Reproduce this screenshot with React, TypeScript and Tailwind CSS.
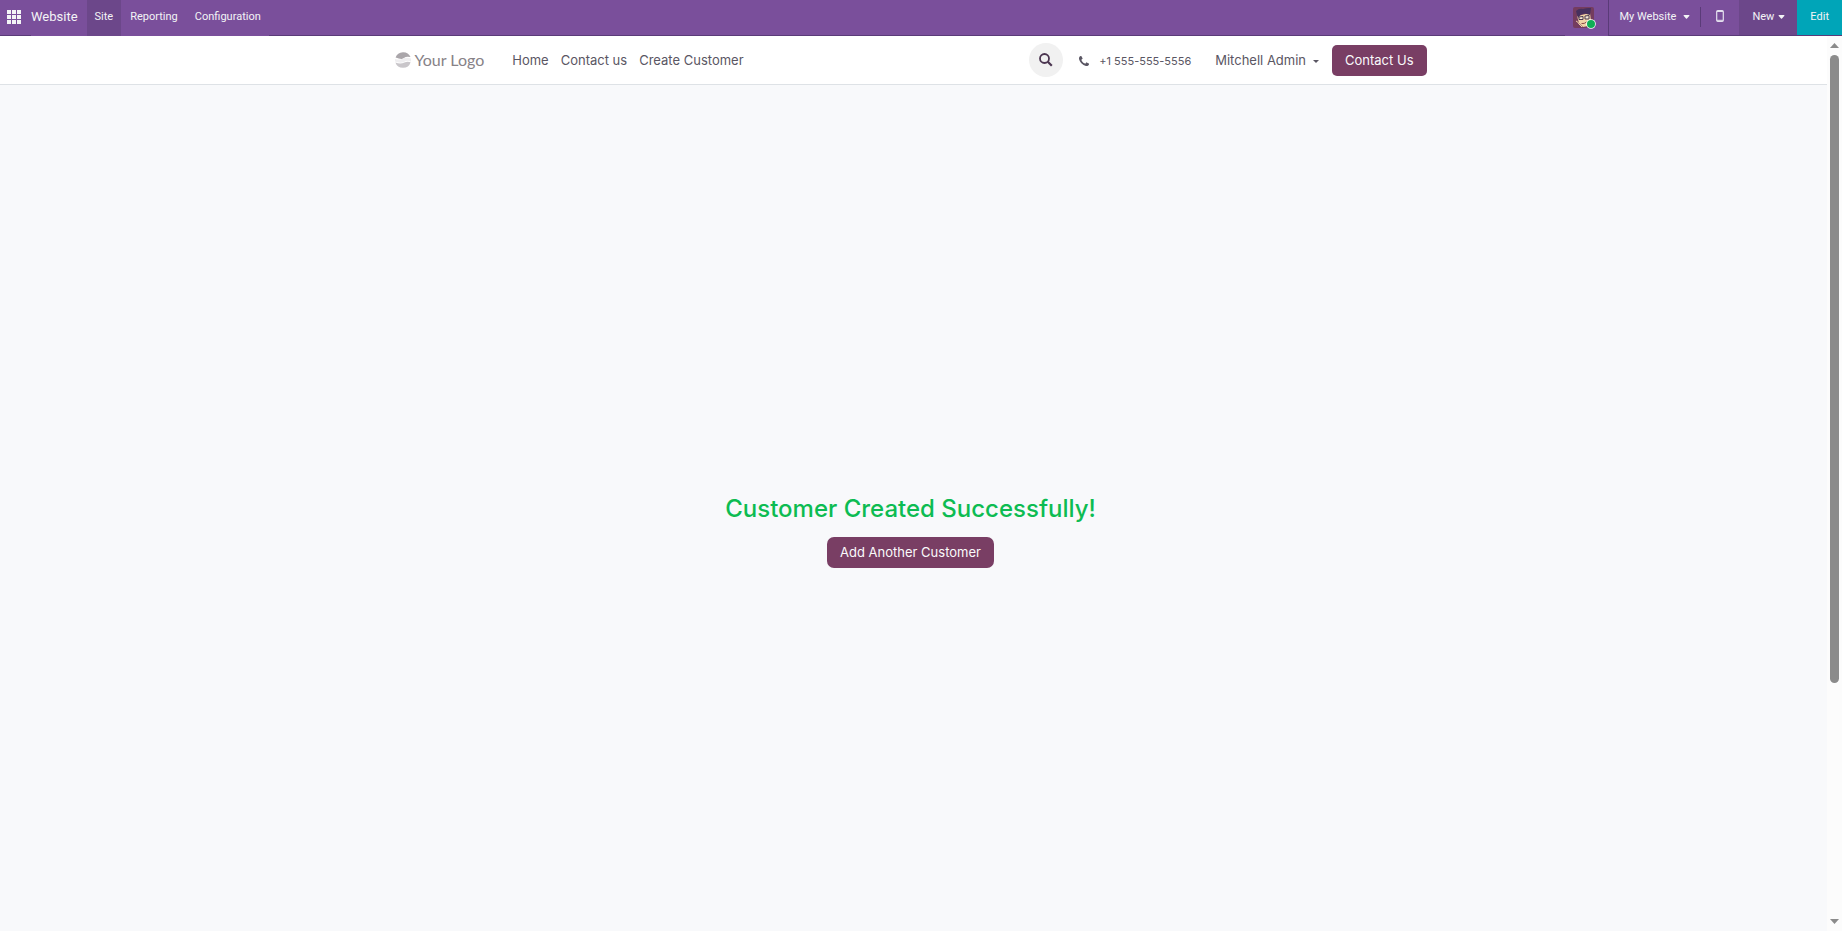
import React from 'react';

const bottomLine = 'border-b border-[#5a3b78]';

const Caret: React.FC = () => (
    <svg viewBox="0 0 8 5" className="w-[7px] h-1 fill-current" aria-hidden="true">
        <path d="M1 0h6q1.2.2.4 1.200L4.600 4.500q-.6.6-1.200 0L.6 1.200Q-.2.2 1 0z" />
    </svg>
);

const AppsIcon: React.FC = () => (
    <svg viewBox="0 0 14 14" className="w-3.5 h-3.5 fill-gray-100" aria-hidden="true">
        {[0, 5, 10].map((y) => [0, 5, 10].map((x) => <rect key={`${x}-${y}`} x={x} y={y} width="4" height="4" />))}
    </svg>
);

const Avatar: React.FC = () => (
    <svg viewBox="0 0 23 22" className="w-[23px] h-[22px]" aria-hidden="true">
        <rect width="21" height="21" rx="2" fill="#743c5e" />
        <path d="M4 9l13-3 1 8-3 5-5 1-4-4z" fill="#f0d3a6" />
        <path d="M3 4q3-3 7-2 4-1.500 8-1l-1 7-5-1.500-4 1L5 11 4 8z" fill="#46305e" />
        <path d="M6 10l4-.5v3H6zM12 9l4-.5v3.500h-4z" fill="#f6ead6" stroke="#4a3850" strokeWidth="1" />
        <path d="M3 14q2 .5 3 3l3 3" stroke="#f0d3a6" fill="none" />
        <path d="M8.500 16.500q3 .5 5-1.500" stroke="#8a4a4a" fill="none" />
        <circle cx="18" cy="17" r="4.800" fill="#fff" />
        <circle cx="18" cy="17" r="4" fill="#0fae55" />
    </svg>
);

const Logo: React.FC = () => (
    <a href="#" className="flex items-center gap-1 text-[#878287]">
        <svg viewBox="0 0 16 16" className="w-4 h-4" aria-hidden="true">
            <path d="M.6 5.500A8 8 0 0 1 15.500 5Q11 4 9 6T.6 5.500z" fill="#aaa6aa" />
            <path d="M0 7q4 1 7 0 3-2 9-.5v3Q12 8 9 10q-4 1.500-9-.5z" fill="#efeef0" />
            <path d="M.4 10.500q5 1.800 9 0 3-1.500 6.200-.3A8 8 0 0 1 .4 10.500z" fill="#c9c6ca" />
        </svg>
        <span className="font-['Lato'] text-base">Your Logo</span>
    </a>
);

const TopBar: React.FC = () => (
    <nav className="flex h-9 shrink-0 bg-[#7a4f9b] text-[11px] text-gray-100 font-['Roboto',sans-serif]">
        <button aria-label="Apps" className={`w-[31px] pl-[7px] pb-px ${bottomLine}`}><AppsIcon /></button>
        <a href="#" className="flex items-center pb-[3px] pr-[9px] text-[13px]">Website</a>
        <button className="px-2 pb-0.5 bg-[#6c478a]">Site</button>
        <button className="px-[9px] pb-0.5">Reporting</button>
        <button className="px-2 pb-0.5">Configuration</button>
        <div className={`flex-1 ${bottomLine}`}></div>
        <button aria-label="Mitchell Admin" className="w-11 pl-2 border-r border-[#5a3b78]"><Avatar /></button>
        <button className={`flex items-center gap-[7px] px-2.5 pb-px ${bottomLine}`}>My Website <Caret /></button>
        <div className={`flex items-center pb-0.5 ${bottomLine}`}><span className="w-px h-5 bg-[#5a3b78]"></span></div>
        <button aria-label="Mobile preview" className={`w-[38px] pl-[15px] pb-[3px] ${bottomLine}`}>
            <svg viewBox="0 0 8 12" className="w-2 h-3" aria-hidden="true">
                <rect x=".7" y=".7" width="6.600" height="10.600" rx="1" fill="none" stroke="#e4e0ee" strokeWidth="1.200" />
                <path d="M1 1.500h6M1 10.300h6" stroke="#e4e0ee" />
            </svg>
        </button>
        <button className={`flex items-center gap-1 pl-[13px] pr-3 pb-px bg-[#6c478a] ${bottomLine}`}>New <Caret /></button>
        <button className={`px-[13px] pb-px bg-[#00a5b8] ${bottomLine}`}>Edit</button>
    </nav>
);

const SiteHeader: React.FC = () => (
    <header className="h-[49px] border-b border-[#dee2e6] bg-white pr-1.5">
        <div className="flex items-center h-12 w-full max-w-[1032px] mx-auto text-[13px] text-[#5a5663]">
            <Logo />
            <nav className="flex gap-3 pl-7 pt-0.5">
                <a href="#">Home</a>
                <a href="#">Contact us</a>
                <a href="#">Create Customer</a>
            </nav>
            <button aria-label="Search" className="flex items-center justify-center ml-auto w-[34px] h-[34px] rounded-full bg-[#f1f1f1]">
                <svg viewBox="0 0 14 14" className="w-3.5 h-3.5" fill="none" stroke="#4b3550" strokeWidth="1.800" aria-hidden="true">
                    <circle cx="5.500" cy="5.500" r="4.500" />
                    <path d="M8.800 8.800l4 4" strokeWidth="2.200" />
                </svg>
            </button>
            <a href="tel:+15555555556" className="flex items-center gap-2.5 ml-4 pt-0.5 text-[11px]">
                <svg viewBox="0 0 1408 1408" className="w-2.5 h-2.5 fill-current" aria-hidden="true">
                    <path d="M1408 1112q0 27-10 70.500t-21 68.500q-21 50-122 106-94 51-186 51-27 0-53-3.500t-57.500-12.500-47-14.500T856 1357t-49-18q-98-35-175-83-127-79-264-216T152 776q-48-77-83-175-3-9-18-49t-20.500-55.500-14.500-47T3.500 392 0 339q0-92 51-186Q107 52 157 31q25-11 68.500-21T296 0q14 0 21 3 18 6 53 76 11 19 30 54t35 63.500 31 53.500q3 4 17.500 25t21.500 35.500 7 28.500q0 20-28.500 50t-62 55-62 53-28.500 46q0 9 5 22.500t8.500 20.500 14 24 11.500 19q76 137 174 235t235 174q2 1 19 11.500t24 14 20.500 8.500 22.500 5q18 0 46-28.500t53-62 55-62 50-28.500q14 0 28.500 7t35.500 21.500 25 17.500q25 15 53.500 31t63.500 35 54 30q70 35 76 53 3 7 3 21z" />
                </svg>
                +1 555-555-5556
            </a>
            <button className="flex items-center gap-[7px] ml-6 pt-0.5">
                Mitchell Admin
                <svg viewBox="0 0 6 3" className="w-1.5 h-[3px] fill-current" aria-hidden="true"><path d="M0 0h6L3 3z" /></svg>
            </button>
            <a href="#" className="ml-[13px] px-[13px] h-[31px] leading-[31px] rounded-[5px] bg-[#793e64] text-gray-50">Contact Us</a>
        </div>
    </header>
);

const ScrollTrack: React.FC = () => (
    <div className="flex flex-col items-center w-[15px] pt-[7px] pb-[7px] bg-[#fcfcfc]" aria-hidden="true">
        <svg viewBox="0 0 9 5" className="w-[9px] h-[5px] fill-[#8b8b8b]"><path d="M4.500 0L9 5H0z" /></svg>
        <div className="flex-1 w-full pt-[7px] px-[3px]">
            <div className="h-8/11 rounded-full bg-[#8b8b8b]"></div>
        </div>
        <svg viewBox="0 0 9 5" className="w-[9px] h-[5px] fill-[#8b8b8b]"><path d="M4.500 5L9 0H0z" /></svg>
    </div>
);

export default function App() {
    return (
        <div className="flex flex-col h-screen font-['Inter',sans-serif]">
            <TopBar />
            <div className="flex flex-1">
                <div className="flex flex-col flex-1 bg-[#f8f9fb]">
                    <SiteHeader />
                    <main className="flex flex-col flex-1 items-center justify-center gap-3 pt-11 pr-1.5">
                        <h2 className="text-2xl font-medium text-[#0dbc52]">Customer Created Successfully!</h2>
                        <button className="px-[13px] pt-px h-[31px] rounded-[7px] bg-[#793e64] text-[13px] text-gray-50">Add Another Customer</button>
                    </main>
                </div>
                <ScrollTrack />
            </div>
        </div>
    );
}
